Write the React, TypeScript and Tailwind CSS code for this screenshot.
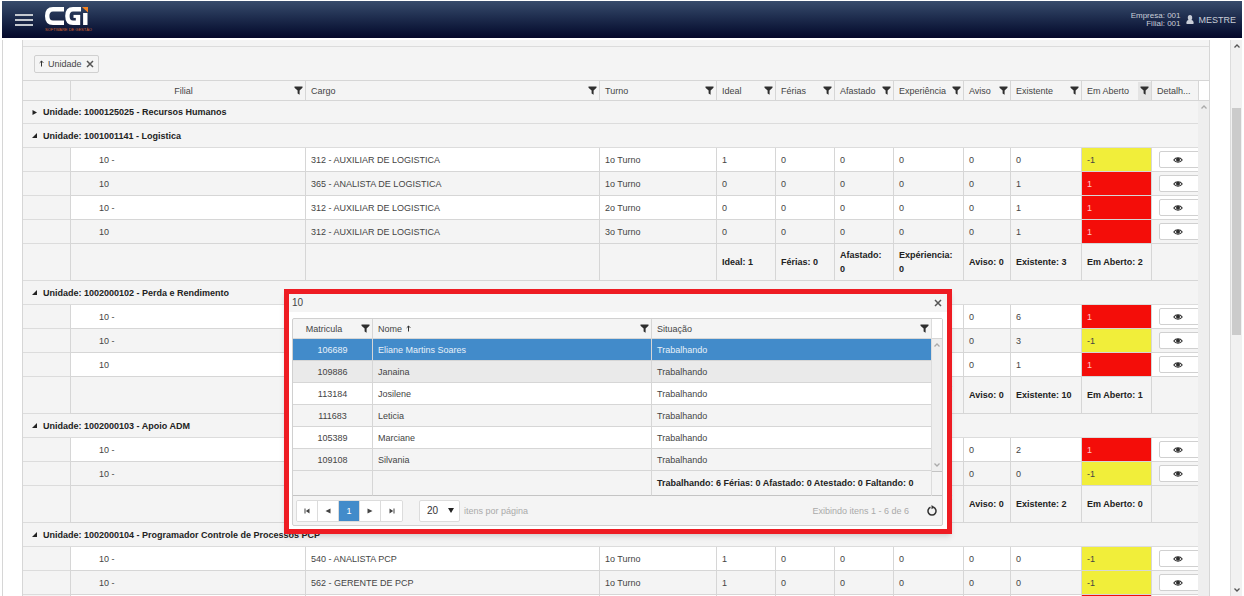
import { useState } from "react";
import type { ReactNode } from "react";

type Row = {
  filial: string;
  cargo: string;
  turno: string;
  ideal: number;
  ferias: number;
  afastado: number;
  experiencia: number;
  aviso: number;
  existente: number;
  aberto: number;
};

type Group = {
  nome: string;
  rows: Row[];
  totais?: { ideal: number; existente: number; aberto: number };
};

const row = (filial: string, cargo: string, turno: string, ideal: number, existente: number, aberto: number): Row => ({
  filial,
  cargo,
  turno,
  ideal,
  ferias: 0,
  afastado: 0,
  experiencia: 0,
  aviso: 0,
  existente,
  aberto,
});

const groups: Group[] = [
  { nome: "1000125025 - Recursos Humanos", rows: [] },
  {
    nome: "1001001141 - Logistica",
    rows: [
      row("10 -", "312 - AUXILIAR DE LOGISTICA", "1o Turno", 1, 0, -1),
      row("10", "365 - ANALISTA DE LOGISTICA", "1o Turno", 0, 1, 1),
      row("10 -", "312 - AUXILIAR DE LOGISTICA", "2o Turno", 0, 1, 1),
      row("10", "312 - AUXILIAR DE LOGISTICA", "3o Turno", 0, 1, 1),
    ],
    totais: { ideal: 1, existente: 3, aberto: 2 },
  },
  {
    nome: "1002000102 - Perda e Rendimento",
    rows: [
      row("10 -", "", "", 5, 6, 1),
      row("10 -", "", "", 4, 3, -1),
      row("10", "", "", 0, 1, 1),
    ],
    totais: { ideal: 9, existente: 10, aberto: 1 },
  },
  {
    nome: "1002000103 - Apoio ADM",
    rows: [row("10 -", "", "", 1, 2, 1), row("10 -", "", "", 1, 0, -1)],
    totais: { ideal: 2, existente: 2, aberto: 0 },
  },
  {
    nome: "1002000104 - Programador Controle de Processos PCP",
    rows: [
      row("10 -", "540 - ANALISTA PCP", "1o Turno", 1, 0, -1),
      row("10 -", "562 - GERENTE DE PCP", "1o Turno", 1, 0, -1),
      row("10 -", "", "", 0, 1, 1),
    ],
  },
];

const pessoas = [
  { matricula: "106689", nome: "Eliane Martins Soares" },
  { matricula: "109886", nome: "Janaina" },
  { matricula: "113184", nome: "Josilene" },
  { matricula: "111683", nome: "Leticia" },
  { matricula: "105389", nome: "Marciane" },
  { matricula: "109108", nome: "Silvania" },
];

const headers = ["Cargo", "Turno", "Ideal", "Férias", "Afastado", "Experiência", "Aviso", "Existente", "Em Aberto"];

const cell = "border-l border-[#d6d6d6] px-[5px]";

function FilterIcon() {
  return (
    <svg viewBox="0 0 9 9" className="h-[9px] w-[9px]" fill="#2e2e2e">
      <path d="M0.5 0.5h8v1.2L5.6 4.6v4.2L3.6 7.4V4.6L0.5 1.7z" />
    </svg>
  );
}

function EyeIcon() {
  return (
    <svg viewBox="0 0 10 8" className="h-2 w-2.5" fill="none" stroke="#2e2e2e">
      <path d="M0.8 4C2.8 1 7.2 1 9.2 4C7.2 7 2.8 7 0.8 4z" strokeWidth="1.1" />
      <circle cx="5" cy="3.8" r="2" fill="#2e2e2e" stroke="none" />
    </svg>
  );
}

function CloseIcon() {
  return (
    <svg viewBox="0 0 8 8" className="h-2 w-2" stroke="#555" strokeWidth="1.5">
      <path d="M1 1l6 6M7 1l-6 6" />
    </svg>
  );
}

function ArrowUp() {
  return (
    <svg viewBox="0 0 5 7" className="h-[7px] w-[5px]" fill="none" stroke="#333">
      <path d="M2.5 6.5V1M0.7 2.8l1.8-1.8l1.8 1.8" />
    </svg>
  );
}

function Chevron({ up, color }: { up?: boolean; color: string }) {
  return (
    <svg viewBox="0 0 6 4" className="h-1 w-1.5" fill="none" stroke={color} strokeWidth="1.3">
      <path d={up ? "M0.5 3.5L3 1l2.5 2.5" : "M0.5 0.5L3 3l2.5-2.5"} />
    </svg>
  );
}

function HeadCell({ label, active, align = "pl-[5px] text-left" }: { label: string; active?: boolean; align?: string }) {
  return (
    <th className="border-l border-[#d6d6d6] p-0 font-normal">
      <div className="flex h-[18px] items-center">
        <span className={`flex-1 overflow-hidden whitespace-nowrap ${align}`}>{label}</span>
        <button
          aria-label={`Filtrar ${label}`}
          className={`flex h-full w-[13px] shrink-0 items-center justify-center ${active ? "bg-[#e4e4e4]" : ""}`}
        >
          <FilterIcon />
        </button>
      </div>
    </th>
  );
}

function Header() {
  return (
    <header className="ml-0.5 mr-0.5 mt-px flex h-[37px] shrink-0 items-center bg-linear-to-b from-[#384c6c] to-[#05082a] pl-[13px] pr-1.5 text-[#c9ced8]">
      <button aria-label="Menu" className="flex w-[18px] flex-col gap-[3px]">
        <span className="h-0.5 bg-[#c4c8cf]" />
        <span className="h-0.5 bg-[#c4c8cf]" />
        <span className="h-0.5 bg-[#c4c8cf]" />
      </button>
      <a href="#" className="ml-3 flex w-[43px] flex-col text-[#d2602a]">
        <svg viewBox="0 0 43 18" className="h-[18px] w-[43px]" fill="none" stroke="#fff" strokeWidth="4.4">
          <path d="M19 2.2H8Q2.2 2.2 2.2 9T8 15.8H19" />
          <path d="M36 2.2H28Q22.4 2.2 22.4 9T28 15.8H33V8" />
          <path d="M28.5 9.4H35" strokeWidth="3" />
          <path d="M40.3 6V18" />
          <path d="M37 0H43V5.5z" fill="#f58220" stroke="none" />
        </svg>
        <span className="mt-0.5 whitespace-nowrap text-[4px] leading-[6px]">SOFTWARE DE GESTÃO</span>
      </a>
      <div className="ml-auto text-right text-[8px] leading-2">
        <p>Empresa: 001</p>
        <p>Filial: 001</p>
      </div>
      <button className="ml-1.5 flex items-center gap-1 text-[9px]">
        <svg viewBox="0 0 8 9" className="h-[9px] w-2" fill="#c9ced8">
          <ellipse cx="4" cy="2.7" rx="2.2" ry="2.7" />
          <path d="M0.5 9V7.2Q0.5 5.6 2.4 5H5.6Q7.5 5.6 7.5 7.2V9z" />
        </svg>
        MESTRE
      </button>
    </header>
  );
}

function GridCols() {
  return (
    <colgroup>
      <col className="w-[47px]" />
      <col className="w-[235px]" />
      <col className="w-[294px]" />
      <col className="w-[117px]" />
      <col className="w-[59px]" />
      <col className="w-[59px]" />
      <col className="w-[59px]" />
      <col className="w-[70px]" />
      <col className="w-[47px]" />
      <col className="w-[71px]" />
      <col className="w-[70px]" />
      <col className="w-[47px]" />
    </colgroup>
  );
}

function GroupRows({ group }: { group: Group }) {
  const open = group.rows.length > 0;
  const t = group.totais;

  return (
    <>
      <tr className={`bg-[#f4f4f4] ${open ? "h-6" : "h-[23px]"}`}>
        <td colSpan={12} className="border-b border-[#dcdcdc] pl-[9px] font-bold text-[#222]">
          <button className="flex items-center gap-1.5">
            <svg viewBox="0 0 5 5" className="h-[5px] w-[5px]" fill="#222">
              <path d={open ? "M5 0V5H0z" : "M0.5 0L5 2.5L0.5 5z"} />
            </svg>
            Unidade: {group.nome}
          </button>
        </td>
      </tr>
      {group.rows.map((r, i) => (
        <tr key={i} className={`h-6 ${i % 2 ? "bg-[#f4f4f4]" : "bg-white"} *:border-b`}>
          <td className="border-[#dcdcdc] bg-[#f4f4f4]" />
          <td className={`${cell} pl-7`}>{r.filial}</td>
          <td className={cell}>{r.cargo}</td>
          <td className={cell}>{r.turno}</td>
          <td className={cell}>{r.ideal}</td>
          <td className={cell}>{r.ferias}</td>
          <td className={cell}>{r.afastado}</td>
          <td className={cell}>{r.experiencia}</td>
          <td className={cell}>{r.aviso}</td>
          <td className={cell}>{r.existente}</td>
          <td className={`${cell} ${r.aberto > 0 ? "bg-[#f40d09] text-[#ffc9c9]" : "bg-[#f1ee3a]"}`}>{r.aberto}</td>
          <td className="overflow-hidden border-l border-[#d6d6d6] pl-[7px]">
            <button
              aria-label="Detalhes"
              className="flex h-[17px] w-12 items-center rounded-xs border border-[#d0d0d0] bg-white pl-[13px]"
            >
              <EyeIcon />
            </button>
          </td>
        </tr>
      ))}
      {t && (
        <tr className="h-[37px] bg-[#f4f4f4] font-bold text-[#222] *:border-b">
          <td className="border-[#dcdcdc]" />
          <td className={cell} />
          <td className={cell} />
          <td className={cell} />
          <td className={cell}>Ideal: {t.ideal}</td>
          <td className={cell}>Férias: 0</td>
          <td className={cell}>Afastado: 0</td>
          <td className={cell}>Expériencia: 0</td>
          <td className={cell}>Aviso: 0</td>
          <td className={cell}>Existente: {t.existente}</td>
          <td className={cell}>Em Aberto: {t.aberto}</td>
          <td className={cell} />
        </tr>
      )}
    </>
  );
}

function PagerButton({ label, active, children }: { label: string; active?: boolean; children: ReactNode }) {
  return (
    <button
      aria-label={label}
      className={`flex w-[21px] items-center justify-center border-r border-[#dcdcdc] last:border-r-0 ${
        active ? "bg-[#428bca] text-white" : "bg-white"
      }`}
    >
      {children}
    </button>
  );
}

function PagerIcon({ d }: { d: string }) {
  return (
    <svg viewBox="0 0 6 6" className="h-1.5 w-1.5" fill="#444">
      <path d={d} />
    </svg>
  );
}

function DetailWindow({ onClose }: { onClose: () => void }) {
  const [selected, setSelected] = useState("106689");

  return (
    <div
      role="dialog"
      aria-label="10"
      className="absolute left-[284px] top-[289px] w-[668px] border-[5px] border-[#ee1c23] bg-white shadow-md"
    >
      <div className="flex h-[18px] items-center justify-between bg-[#f4f4f4] pl-[3px] pr-[5px] text-[10px]">
        <span>10</span>
        <button aria-label="Fechar" onClick={onClose}>
          <CloseIcon />
        </button>
      </div>
      <div className="mb-[3px] ml-[3px] mr-1 mt-1.5 rounded-xs border border-[#d0d0d0] bg-[#f4f4f4]">
        <div className="flex">
          <table className="flex-1 table-fixed border-separate border-spacing-0">
            <colgroup>
              <col className="w-[79px]" />
              <col className="w-[279px]" />
              <col className="w-[280px]" />
            </colgroup>
            <thead>
              <tr className="h-5 *:border-b *:first:border-l-0">
                <HeadCell label="Matricula" align="pr-1 text-center" />
                <th className="border-l border-[#d6d6d6] p-0 font-normal">
                  <div className="flex items-center justify-between pl-[5px] pr-0.5">
                    <span className="flex items-center gap-1">
                      Nome <ArrowUp />
                    </span>
                    <button aria-label="Filtrar Nome">
                      <FilterIcon />
                    </button>
                  </div>
                </th>
                <HeadCell label="Situação" />
              </tr>
            </thead>
            <tbody>
              {pessoas.map((p, i) => (
                <tr
                  key={p.matricula}
                  onClick={() => setSelected(p.matricula)}
                  className={`h-[22px] *:border-b *:border-[#d6d6d6] ${
                    p.matricula === selected
                      ? "bg-[#428bca] text-[#e8f1f9]"
                      : i === 1
                        ? "bg-[#eaeaea]"
                        : i % 2
                          ? "bg-[#f4f4f4]"
                          : "bg-white"
                  }`}
                >
                  <td className="text-center">{p.matricula}</td>
                  <td className="border-l px-[5px]">{p.nome}</td>
                  <td className="border-l px-[5px]">Trabalhando</td>
                </tr>
              ))}
            </tbody>
            <tfoot>
              <tr className="h-[25px] font-bold text-[#222] *:border-b *:border-b-[#c4c4c4]">
                <td />
                <td className="border-l border-l-[#d6d6d6]" />
                <td className="whitespace-nowrap border-l border-l-[#d6d6d6] px-[5px]">
                  Trabalhando: 6 Férias: 0 Afastado: 0 Atestado: 0 Faltando: 0
                </td>
              </tr>
            </tfoot>
          </table>
          <div className="flex w-[11px] flex-col border-l border-[#dcdcdc]">
            <div className="h-5 border-b border-[#d6d6d6] bg-white" />
            <div className="flex flex-1 flex-col items-center justify-between bg-[#eeeeee] py-1">
              <Chevron up color="#aaa" />
              <Chevron color="#aaa" />
            </div>
            <div className="h-[25px] border-y border-[#c4c4c4]" />
          </div>
        </div>
        <div className="flex h-[29px] items-center pl-[3px] pr-[5px] text-[#aaa]">
          <div className="flex h-[22px] overflow-hidden rounded-xs border border-[#dcdcdc]">
            <PagerButton label="Primeira página">
              <PagerIcon d="M0.5 0.5h1v5h-1zM5.5 0.5v5L1.8 3z" />
            </PagerButton>
            <PagerButton label="Página anterior">
              <PagerIcon d="M5.5 0.5v5L0.5 3z" />
            </PagerButton>
            <PagerButton label="Página 1" active>
              1
            </PagerButton>
            <PagerButton label="Próxima página">
              <PagerIcon d="M0.5 0.5v5L5.5 3z" />
            </PagerButton>
            <PagerButton label="Última página">
              <PagerIcon d="M4.5 0.5h1v5h-1zM0.5 0.5v5L4.2 3z" />
            </PagerButton>
          </div>
          <label className="ml-4 flex items-center gap-1">
            <span className="grid items-center">
              <select className="col-start-1 row-start-1 h-[22px] w-[41px] appearance-none rounded-xs border border-[#dcdcdc] bg-white pl-[7px] text-[10px] text-[#333]">
                <option>20</option>
                <option>50</option>
              </select>
              <svg viewBox="0 0 6 5" className="pointer-events-none col-start-1 row-start-1 mr-1.5 h-[5px] w-1.5 justify-self-end" fill="#222">
                <path d="M0 0h6L3 5z" />
              </svg>
            </span>
            itens por página
          </label>
          <span className="ml-auto">Exibindo itens 1 - 6 de 6</span>
          <button aria-label="Atualizar" className="ml-[18px]">
            <svg viewBox="0 0 10 11" className="h-[11px] w-2.5" fill="none" stroke="#333" strokeWidth="1.5">
              <path d="M6.5 2.3A4 4 0 1 1 3.5 2.3" />
              <path d="M4.5 0L7.6 2.2L4.5 4.2z" fill="#333" stroke="none" />
            </svg>
          </button>
        </div>
      </div>
    </div>
  );
}

function App() {
  const [open, setOpen] = useState(true);

  return (
    <div className="relative flex h-screen flex-col overflow-hidden bg-white font-['Liberation_Sans',Arial,sans-serif] text-[9px] leading-[14px] text-[#444]">
      <Header />
      <main className="ml-0.5 mr-0.5 mt-0.5 flex min-h-0 flex-1 border-l border-[#d6d6d6]">
        <section className="ml-[19px] mr-5 flex min-w-0 flex-1 flex-col overflow-hidden border-x border-[#d6d6d6] bg-[#f4f4f4]">
          <div className="h-[7px] shrink-0 border-b border-[#dcdcdc]" />
          <div className="flex h-[33px] shrink-0 items-center px-[11px]">
            <button className="flex h-[18px] items-center gap-1 rounded-xs border border-[#d0d0d0] px-1">
              <ArrowUp />
              Unidade
              <CloseIcon />
            </button>
          </div>
          <div className="flex min-h-0 flex-1 border-t border-[#d6d6d6]">
            <div className="min-w-0 flex-1">
              <table className="w-full table-fixed border-separate border-spacing-0">
                <GridCols />
                <thead>
                  <tr className="h-5 *:border-b">
                    <th className="border-[#d6d6d6]" />
                    <HeadCell label="Filial" align="pl-1 text-center" />
                    {headers.map((h) => (
                      <HeadCell key={h} label={h} active={h === "Em Aberto"} />
                    ))}
                    <th title="Detalhes" className="whitespace-nowrap border-l border-[#d6d6d6] pl-[5px] text-left font-normal">
                      Detalh...
                    </th>
                  </tr>
                </thead>
                <tbody>
                  {groups.map((g) => (
                    <GroupRows key={g.nome} group={g} />
                  ))}
                </tbody>
              </table>
            </div>
            <div className="flex w-[11px] shrink-0 flex-col">
              <div className="h-5 border-b border-l border-[#d6d6d6] bg-white" />
              <div className="flex flex-1 justify-center bg-[#eeeeee] pt-1">
                <Chevron up color="#aaa" />
              </div>
            </div>
          </div>
        </section>
        <div className="flex w-3 shrink-0 flex-col items-center border-l border-[#dcdcdc] bg-[#f1f1f1] py-1">
          <Chevron up color="#555" />
          <div className="mt-[60px] h-[227px] w-[9px] bg-[#cbcbcb]" />
          <div className="mt-auto">
            <Chevron color="#555" />
          </div>
        </div>
      </main>
      {open && <DetailWindow onClose={() => setOpen(false)} />}
    </div>
  );
}

export default App;
